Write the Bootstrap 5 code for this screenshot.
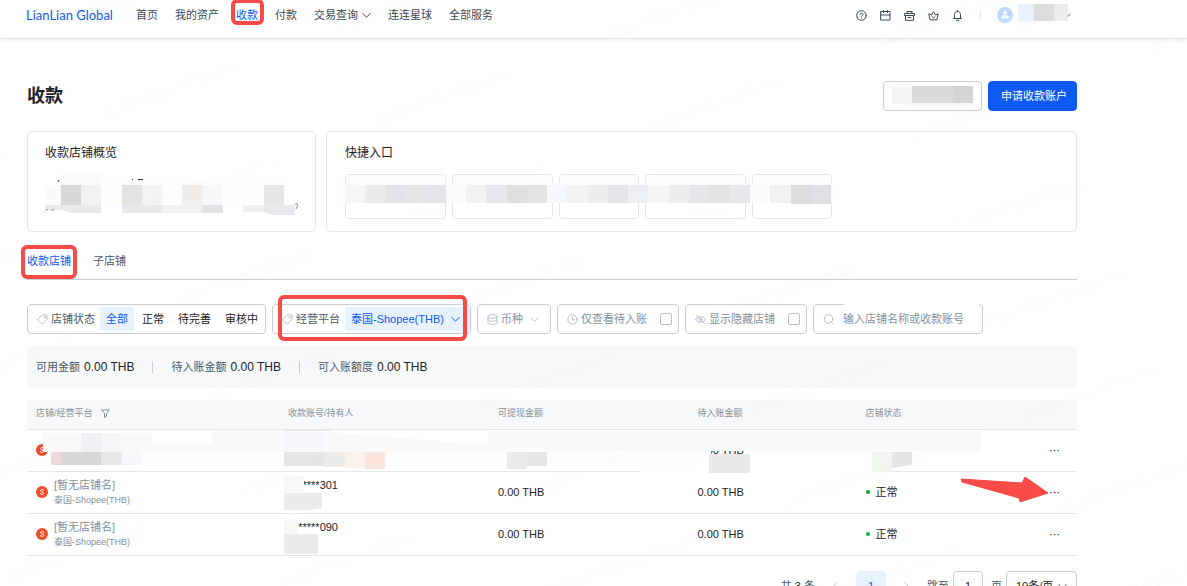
<!DOCTYPE html>
<html lang="zh-CN">
<head>
<meta charset="utf-8">
<meta name="viewport" content="width=device-width, initial-scale=1">
<title>收款 - LianLian Global</title>
<link href="https://cdn.jsdelivr.net/npm/bootstrap@5.3.0/dist/css/bootstrap.min.css" rel="stylesheet">
<style>
:root{--blue:#0f5af5;--ink:#1d2129;--soft:#4e5969;--mute:#86909c;--line:#e5e6eb;--edge:#c9cdd4;--red:#f84b48}
body{font:11px/16px "Liberation Sans","Noto Sans CJK SC",sans-serif;color:var(--ink);background:#fff}
a{text-decoration:none;color:inherit}
svg{display:block;flex:none}
.ico{fill:none;stroke:currentColor;stroke-width:1;stroke-linecap:round;stroke-linejoin:round}
.topbar{height:39px;padding:0 117px 8px 26px;border-bottom:1px solid var(--line);box-shadow:0 2px 4px rgba(0,0,0,.06)}
.brand{font:13px/20px Lato,sans-serif;color:var(--blue);width:110px}
.menu{gap:17px;color:#3f4756}
.tools{gap:13px;color:#3f4756}
.shell{padding:42px 110px 0 27px}
.title{font-size:18px;line-height:30px;font-weight:700}
.heading{gap:6px}
.act{height:30px;border-radius:4px;font-size:11px;line-height:16px;padding:0 12px}
.act-main{background:var(--blue);border-color:var(--blue);color:#fff;width:89px;white-space:nowrap}
.act-line{border-color:var(--edge);background:#fff;width:99px;padding:0 7px}
.panels{gap:10px;margin-top:20px}
.panel{border:1px solid var(--line);border-radius:5px;height:101px;padding:12px 18px}
.panel h2{font-size:12px;line-height:18px;font-weight:400;margin:0}
.overview{flex:0 0 289px;min-width:0;padding:12px 17px}
.entries{gap:6px;margin-top:12px}
.entry{height:45px;border:1px solid var(--line);border-radius:4px;background:#fff;width:101px;padding:0}
.entry.short{width:80px}
.tabs{height:48px;border-bottom:1px solid var(--edge);gap:22px;color:var(--soft);padding-bottom:10px}
.tabs .on,.menu .on{color:var(--blue)}
.ring::after{content:"";position:absolute;border:4px solid var(--red);border-radius:6px;pointer-events:none;inset:-8px -6px -10px -6px}
.menu .ring::after{inset:-8px -6px -2px -5px}
.filters{gap:6px;margin-top:24px}
.fbox{height:30px;border:1px solid var(--edge);border-radius:4px;gap:3px;padding:0 0 0 9px;white-space:nowrap;color:var(--mute);background:#fff;font-size:11px;line-height:16px;text-align:left}
.fbox .ico{color:#b9bec8}
.fbox .name{color:var(--soft)}
.chips{gap:2px;padding-right:1px;margin-left:2px}
.chip{border:0;background:none;height:24px;border-radius:3px;padding:0 6px;color:var(--ink);line-height:16px}
.chip.on{background:#e8f2ff;color:var(--blue)}
.fbox .chip .ico{color:var(--blue)}
.platform{width:199px}
.platform .chip{margin-left:2px}
.platform.ring::after{inset:-10px 3px -8px 5px}
.currency{width:74px}
.toggle{width:122px}
.toggle input{appearance:none;width:12px;height:12px;border:1px solid #b9bec8;border-radius:2px;margin:0 6px 0 auto}
.search{width:170px}
.search::before{content:"";position:absolute;top:-1px;left:30px;right:3px;height:1px;background:#fff}
.search input{border:0;outline:0;background:none;min-width:0;width:136px;margin-left:6px;padding:0}
.search input::placeholder{color:var(--mute);opacity:1}
.totals{height:42px;margin-top:12px;background:#f7f8fa;border-radius:4px;padding:0 9px;color:var(--soft)}
.totals b{font-weight:400;font-size:12px;color:var(--ink);margin-left:4px}
.totals i{width:1px;height:12px;background:var(--edge);margin:0 18px}
.shoplist{margin-top:12px}
.shops{table-layout:fixed;width:100%;border-collapse:separate;border-spacing:0}
.shops th{height:30px;font-size:9px;line-height:12px;font-weight:400;color:var(--mute);background:#f7f8fa;padding:0 9px 3px;border-bottom:1px solid var(--line);white-space:nowrap}
.shops td{height:42px;padding:0 9px 2px;border-bottom:1px solid var(--line)}
.store{gap:6px;color:var(--mute)}
.sub{font-size:9px;line-height:14px;color:var(--mute);height:13px}
.account{width:50px;text-align:right}
.dot{width:4px;height:4px;border-radius:50%;background:#00b42a;margin-right:6px}
.more{border:0;background:none;padding:0 8px 0 0;line-height:16px}
.overlay{position:absolute;left:0;top:29px;pointer-events:none}
.pager{margin-top:15px;height:30px;color:var(--soft)}
.pager .step{margin:0 16px;color:#b9bec8}
.pg{height:30px;border:1px solid var(--edge);border-radius:4px;background:#fff;font-size:11px;text-align:center;color:var(--ink);padding:0}
.pg.on{background:#e8f2ff;border-color:#e8f2ff;color:var(--blue)}
.w30{width:30px}
select.pg{width:71px;appearance:none;text-align:left;padding-left:9px}
.caret{position:absolute;right:10px;top:11px}
.stamp{position:fixed;inset:0;pointer-events:none;width:100%;height:100%}
.stamp text{font:14px "Noto Sans",sans-serif;fill:#000;fill-opacity:.016}
</style>
</head>
<body class="vh-100 overflow-hidden">
<svg class="d-none">
  <symbol id="tag" viewBox="0 0 11 11"><path d="M5.8.8 10 1l.2 4.2L5 10.2.8 6z"/><circle cx="7.8" cy="3.3" r=".7"/></symbol>
  <symbol id="down" viewBox="0 0 9 9"><path d="M.8 2.5 4.5 6.2 8.2 2.5"/></symbol>
  <symbol id="shop" viewBox="0 0 12 12"><circle cx="6" cy="6" r="6" fill="#ee4d2d" stroke="none"/><path d="M7.7 4.2C6.8 3.3 4.5 3.2 4.5 4.7c0 1.4 3.2 1 3.2 2.6 0 1.500-2.500 1.400-3.500.4" stroke="#fff" fill="none"/></symbol>
</svg>

<header class="topbar d-flex align-items-center">
  <a class="brand" href="#">LianLian Global</a>
  <nav class="menu d-flex align-items-center text-nowrap">
    <a href="#">首页</a><a href="#">我的资产</a><a href="#" class="on ring position-relative">收款</a><a href="#">付款</a>
    <a href="#" class="d-flex align-items-center gap-1">交易查询<svg class="ico" width="9" height="9"><use href="#down"/></svg></a>
    <a href="#">连连星球</a><a href="#">全部服务</a>
  </nav>
  <div class="tools d-flex align-items-center ms-auto">
    <svg class="ico" width="11" height="11" viewBox="0 0 11 11"><circle cx="5.500" cy="5.500" r="4.800"/><path d="M4.100 4.500c0-2 2.900-1.800 2.900-.1 0 1-1.500 1-1.500 2M5.500 8v.1"/></svg>
    <svg class="ico" width="11" height="11" viewBox="0 0 11 11"><path d="M1 1.500h9v8.500H1zM1 5h9M3.500.5v2M7.500.5v2"/></svg>
    <svg class="ico" width="11" height="11" viewBox="0 0 11 11"><path d="M.5 3.500h10v2H.5zM1.500 5.500v4.800h8V5.500M3.500 3.500 2.800 1.500h5.400l-.7 2M4 7.500h3"/></svg>
    <svg class="ico" width="11" height="11" viewBox="0 0 11 11"><path d="M2 9.500.8 3.800 3.500 5l2-3.500 2 3.500 2.700-1.200L9 9.500zM4 6.500l1.500 1.300L7 6.500"/></svg>
    <svg class="ico" width="11" height="11" viewBox="0 0 11 11"><path d="M1.500 8.500h8M2.500 8.500V4.500c0-4 6-4 6 0v4M4.500 10.300h2M5.500.5v1"/></svg>
    <svg class="ms-1" width="90" height="22" viewBox="980 4 90 22" aria-label="账户">
      <path d="M980.500 11v9" stroke="#e5e6eb"/><circle cx="1005" cy="15" r="8" fill="#bedaff"/><circle cx="1005" cy="12.500" r="2" fill="#fff"/><path d="M1001 18.500c0-5 8-5 8 0z" fill="#fff"/>
      <path fill="#e8f2ff" d="M1018 3h16v18h-16z"/><path fill="#f7faff" d="M1018 21h16v4h-16z"/><path fill="#ddd" d="M1034 3h20v18h-20z"/><path fill="#ececec" d="M1054 3h14v18h-14z"/><path d="M1068 16.500 1070.500 13.500" stroke="#4e5969"/>
    </svg>
  </div>
</header>

<main class="shell">
  <div class="heading d-flex align-items-center">
    <h1 class="title m-0 me-auto">收款</h1>
    <button class="btn act act-line" aria-label="账户管理"><svg width="83" height="24" viewBox="0 0 83 24"><path fill="#f5f5f5" d="M1 3h20v17H1z"/><path fill="#dadada" d="M21 2h41v17H21z"/><path fill="#d5d5d5" d="M62 2h20v17H62z"/><path fill="#f9f9f9" d="M19 19h63v3H19z"/></svg></button>
    <button class="btn act act-main">申请收款账户</button>
  </div>

  <div class="panels d-flex">
    <section class="panel overview">
      <h2>收款店铺概览</h2>
      <svg class="mt-2" width="255" height="50" viewBox="45 170 255 50">
        <path fill="#fbfbfb" d="M61 173h40v12H61z"/><path fill="#fdfdfd" d="M101 181h183v24H101z"/>
        <path fill="#fbfaf8" d="M45 187l16-3v21H45z"/><path fill="#d8d8d8" d="M61 185h20v20H61z"/><path fill="#f1f1f1" d="M81 185h20v20H81z"/>
        <path fill="#e3e3e1" d="M122 185h20v20h-20z"/><path fill="#f3f3f3" d="M142 185h20v20h-20z"/><path fill="#efeeed" d="M182 185h21v20h-21z"/><path fill="#f6f7f9" d="M203 185h20v20h-20z"/><path fill="#e7e7e7" d="M264 185h20v20h-20z"/>
        <path fill="#e8e9ec" d="M45 205h56v8H71l-9-3H45zM122 205h40v8h-40z"/><path fill="#f0f0f2" d="M162 205h41v8h-41zM243 205h21v7h-21z"/><path fill="#e2e3e7" d="M203 205h20v8h-20z"/><path fill="#e9eaee" d="M264 205h31v10h-23l-8-3z"/>
        <path stroke="#333" d="M58 182l1-2M138 179.500h5M132 179.500h1"/><path stroke="#86909c" d="M46 211l2-2M51 210h3M295 204h3M296 209l2-4"/>
      </svg>
    </section>
    <section class="panel flex-grow-1">
      <h2>快捷入口</h2>
      <div class="entries d-flex position-relative">
        <button class="entry" aria-label="快捷入口一"></button><button class="entry" aria-label="快捷入口二"></button><button class="entry short" aria-label="快捷入口三"></button><button class="entry" aria-label="快捷入口四"></button><button class="entry short" aria-label="快捷入口五"></button>
        <svg class="position-absolute top-0" style="left:-8px" width="496" height="45" viewBox="337 174 496 45">
          <path fill="#fcfcfc" d="M337 183h496v19H337z"/><path fill="#f6f6f6" d="M345 185h20v18h-20z"/><path fill="#eaecea" d="M365 185h20v18h-20z"/><path fill="#e3e4e7" d="M385 185h20v18h-20z"/><path fill="#e5e6e5" d="M405 185h21v18h-21z"/><path fill="#e3e5e8" d="M426 185h20v18h-20z"/>
          <path fill="#f1f3f2" d="M466 185h20v18h-20z"/><path fill="#e7e8eb" d="M486 185h21v18h-21z"/><path fill="#dfdfdf" d="M507 185h20v18h-20z"/><path fill="#e2e4e2" d="M527 185h20v18h-20z"/><path fill="#f6f7fa" d="M547 185h20v18h-20z"/><path fill="#f2f2f2" d="M567 185h21v18h-21z"/><path fill="#ededed" d="M588 185h20v18h-20z"/><path fill="#e5e6e9" d="M608 185h20v18h-20z"/><path fill="#eeeff2" d="M628 185h20v18h-20z"/>
          <path fill="#f5f5f5" d="M648 185h21v18h-21z"/><path fill="#ecedef" d="M669 185h20v18h-20z"/><path fill="#e6e7ea" d="M689 185h20v18h-20z"/><path fill="#e3e5e3" d="M709 185h21v18h-21z"/><path fill="#e8e9ec" d="M730 185h20v18h-20z"/><path fill="#f1f1f1" d="M770 185h21v18h-21z"/><path fill="#dcdcdc" d="M791 185h20v19h-20z"/><path fill="#dfe0e3" d="M811 185h20v19h-20z"/>
        </svg>
      </div>
    </section>
  </div>

  <nav class="tabs d-flex align-items-end"><a href="#" class="on ring position-relative">收款店铺</a><a href="#">子店铺</a></nav>

  <div class="filters d-flex">
    <div class="fbox d-flex align-items-center"><svg class="ico" width="11" height="11"><use href="#tag"/></svg><span class="name">店铺状态</span>
      <div class="chips d-flex"><button class="chip on">全部</button><button class="chip">正常</button><button class="chip">待完善</button><button class="chip">审核中</button></div></div>
    <div class="fbox platform ring position-relative d-flex align-items-center"><svg class="ico" width="11" height="11"><use href="#tag"/></svg><span class="name">经营平台</span><button class="chip on d-flex align-items-center flex-grow-1">泰国-Shopee(THB)<svg class="ico ms-auto me-1" width="9" height="9"><use href="#down"/></svg></button></div>
    <button class="fbox currency d-flex align-items-center"><svg class="ico" width="11" height="11" viewBox="0 0 11 11"><ellipse cx="5.500" cy="2.500" rx="4.500" ry="1.800"/><path d="M1 2.500v6c0 2.400 9 2.400 9 0v-6M1 5.500c0 2.400 9 2.400 9 0"/></svg><span>币种</span><svg class="ico ms-1" width="9" height="9"><use href="#down"/></svg></button>
    <label class="fbox toggle d-flex align-items-center"><svg class="ico" width="11" height="11" viewBox="0 0 11 11"><circle cx="5.500" cy="5.500" r="4.700"/><path d="M5.500 3v2.700h2"/></svg><span>仅查看待入账</span><input type="checkbox"></label>
    <label class="fbox toggle d-flex align-items-center"><svg class="ico" width="11" height="11" viewBox="0 0 11 11"><path d="M.7 5.500c2.400-4 7.200-4 9.600 0-2.400 4-7.200 4-9.600 0zM1.500 1.500l8 8"/><circle cx="5.500" cy="5.500" r="1.500"/></svg><span>显示隐藏店铺</span><input type="checkbox"></label>
    <label class="fbox search position-relative d-flex align-items-center"><svg class="ico" width="11" height="11" viewBox="0 0 11 11"><circle cx="5.500" cy="5" r="4.300"/><path d="M8.500 8.300 10 10"/></svg><input type="text" placeholder="输入店铺名称或收款账号" aria-label="搜索店铺"></label>
  </div>

  <div class="totals d-flex align-items-center"><span>可用金额</span><b>0.00 THB</b><i></i><span>待入账金额</span><b>0.00 THB</b><i></i><span>可入账额度</span><b>0.00 THB</b></div>

  <div class="shoplist position-relative">
    <table class="shops">
      <colgroup><col style="width:24%"><col style="width:20%"><col style="width:19%"><col style="width:16%"><col></colgroup>
      <thead><tr><th><span class="d-flex align-items-center gap-2">店铺/经营平台<svg class="ico" width="9" height="9" viewBox="0 0 9 9"><path d="M.7 1h7.600L5.500 4.500v3l-2 1v-4z"/></svg></span></th><th>收款账号/持有人</th><th>可提现金额</th><th>待入账金额</th><th>店铺状态</th></tr></thead>
      <tbody>
        <tr><td><svg class="ico" width="12" height="12"><use href="#shop"/></svg></td><td></td><td></td><td>0.00 THB</td><td><div class="text-end"><button class="more">···</button></div></td></tr>
        <tr><td><div class="store d-flex align-items-center"><svg class="ico" width="12" height="12"><use href="#shop"/></svg><div>[暂无店铺名]<div class="sub">泰国-Shopee(THB)</div></div></div></td><td><div class="account">****301</div><div class="sub"></div></td><td>0.00 THB</td><td>0.00 THB</td><td><div class="d-flex align-items-center"><span class="dot"></span>正常<button class="more ms-auto">···</button></div></td></tr>
        <tr><td><div class="store d-flex align-items-center"><svg class="ico" width="12" height="12"><use href="#shop"/></svg><div>[暂无店铺名]<div class="sub">泰国-Shopee(THB)</div></div></div></td><td><div class="account">*****090</div><div class="sub"></div></td><td>0.00 THB</td><td>0.00 THB</td><td><div class="d-flex align-items-center"><span class="dot"></span>正常<button class="more ms-auto">···</button></div></td></tr>
      </tbody>
    </table>
    <svg class="overlay" width="1050" height="130" viewBox="27 429 1050 130">
      <path fill="#fdfdfd" d="M122 452h575v13H122z"/><path fill="#fff" d="M641 466h248v7H641z"/>
      <path fill="#f9f9f9" d="M43 433h109v12h60v-15h90l186 15v-14h493v20H488v1H43z"/><path fill="#f0f1f4" d="M81 433h20v19H81z"/><path fill="#f5f6f8" d="M101 433h20v19h-20z"/><path fill="#f6f7fa" d="M284 432h41v20h-41z"/><path fill="#e8e9ec" d="M284 430h48v1h-48z"/>
      <path fill="#edd8d8" d="M51 452h10v13H51z"/><path fill="#d7d7d8" d="M61 452h40v13H61z"/><path fill="#e8e8e8" d="M101 452h21v13h-21z"/><path fill="#f6f7fa" d="M122 452h20v13h-20z"/>
      <path fill="#e5e5e5" d="M284 452h40v14h-40z"/><path fill="#ebedec" d="M324 452h21v15h-21z"/><path fill="#fbf1eb" d="M345 452h20v16h-20z"/><path fill="#fce4de" d="M365 452h20v17h-20z"/>
      <path fill="#e8ebea" d="M507 452h20v17h-20z"/><path fill="#e6e6e6" d="M527 452h20v14h-20z"/><path fill="#fff" d="M697 451h14v4h-14z"/><path fill="#eae9e8" d="M709 454h41v19h-41z"/>
      <path fill="#f2f4f1" d="M872 452h20v20h-20z"/><path fill="#e5e5e5" d="M892 452h20v13l-20 3z"/>
      <path fill="#f8f8f8" d="M284 476h20v17h-20zM284 519h14v15h-14z"/><path fill="#ebebeb" d="M284 493h38v15l-12 2h-26zM284 534h34v20h-34z"/>
      <path fill="#f84b48" stroke="#f84b48" stroke-linejoin="round" d="M961 479 1022 483 1025 477 1048 493 1020 502 1019 498 962 482z"/>
    </svg>
  </div>

  <div class="pager d-flex align-items-center justify-content-end text-nowrap">
    <span>共 <span class="text-dark">3</span> 条</span>
    <svg class="ico step" width="9" height="9" viewBox="0 0 9 9"><path d="M6 .8 2.500 4.500 6 8.200"/></svg>
    <button class="pg on w30">1</button>
    <svg class="ico step" width="9" height="9" viewBox="0 0 9 9"><path d="M3 .8 6.500 4.500 3 8.200"/></svg>
    <label for="jump">跳至</label><input id="jump" class="pg w30 mx-1" value="1"><span class="mx-1">页</span>
    <span class="position-relative"><select class="pg" aria-label="每页条数"><option>10条/页</option></select><svg class="ico caret" width="9" height="9"><use href="#down"/></svg></span>
  </div>
</main>

<svg class="stamp" id="stamp" aria-hidden="true"></svg>
<script>
// Repeats the faint diagonal stamp over the whole window.
const stamp = document.getElementById('stamp');
for (let j = -2; j < 7; j++) for (let i = -2; i < 5; i++) {
  const x = 105 + 271 * i + 35 * j, y = 119 + 7 * i + 94 * j;
  if (x < -150 || x > innerWidth || y < 0 || y > innerHeight + 50) continue;
  const t = document.createElementNS('http://www.w3.org/2000/svg', 'text');
  t.setAttribute('transform', `translate(${x} ${y}) rotate(-20)`);
  t.textContent = '2025/11/06 15:30-jincj';
  stamp.append(t);
}
</script>
<script src="https://cdn.jsdelivr.net/npm/bootstrap@5.3.0/dist/js/bootstrap.bundle.min.js"></script>
</body>
</html>
